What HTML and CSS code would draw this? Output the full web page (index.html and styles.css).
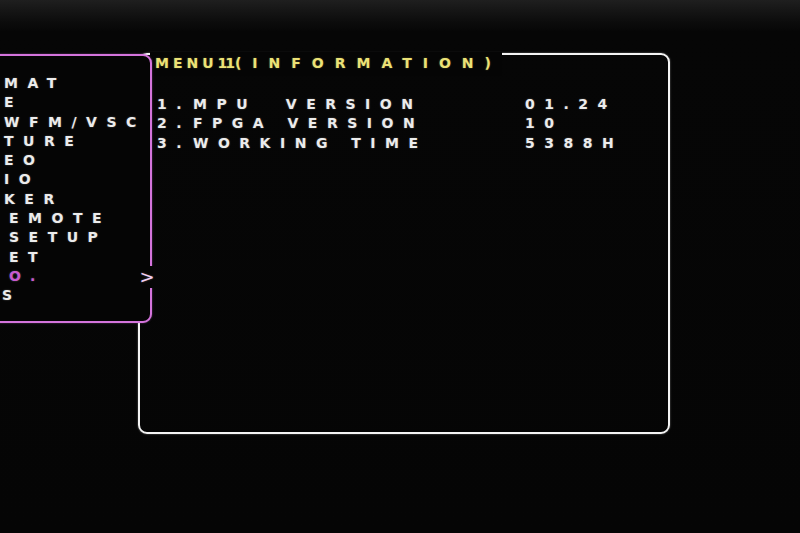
FILE: index.html
```html
<!DOCTYPE html>
<html lang="en">
<head>
<meta charset="utf-8">
<title>MENU11 (INFORMATION)</title>
<link rel="stylesheet" href="styles.css">
</head>
<body>
<div class="screen">
  <section class="info">
    <h1 class="title"><span class="t-menu">MENU</span><span class="t-num">11 </span><span class="t-info">(INFORMATION)</span></h1>
    <div class="rows">
      <div class="row"><span class="num">1.</span><span class="label">MPU  VERSION</span><span class="val">01.24</span></div>
      <div class="row"><span class="num">2.</span><span class="label">FPGA VERSION</span><span class="val">10</span></div>
      <div class="row"><span class="num">3.</span><span class="label">WORKING TIME</span><span class="val">5388H</span></div>
    </div>
  </section>
  <nav class="menu">
    <ul>
      <li>MAT</li>
      <li>E</li>
      <li>WFM/VSC</li>
      <li>TURE</li>
      <li>EO</li>
      <li>IO</li>
      <li>KER</li>
      <li class="in">EMOTE</li>
      <li class="in">SETUP</li>
      <li class="in">ET</li>
      <li class="in sel"><span>O.</span><span class="arrow">&gt;</span></li>
      <li class="cut">S</li>
    </ul>
  </nav>
</div>
</body>
</html>
```
FILE: styles.css
```css
html, body {
  margin: 0;
  height: 100%;
}
body {
  overflow: hidden;
  background: linear-gradient(#1f1f1f 0, #161616 10px, #0c0c0c 22px, #060606 32px, #050505 100%);
  font-family: "DejaVu Sans", sans-serif;
  font-size: 14px;
  font-weight: bold;
  color: #ececec;
}
.screen {
  position: relative;
  width: 800px;
  height: 533px;
  box-sizing: border-box;
  padding: 53px 0 0 138px;
}
.info {
  position: relative;
  box-sizing: border-box;
  width: 532px;
  height: 381px;
  border: 2px solid #f4f4f4;
  border-radius: 9px;
  box-shadow: 0 0 2px rgba(255, 255, 255, 0.45);
}
.title {
  position: absolute;
  top: -3px;
  left: 10px;
  margin: 0;
  padding: 2px 0 2px 5px;
  background: #050505;
  font-size: 14px;
  font-weight: bold;
  line-height: 19.5px;
  color: #ece276;
  white-space: pre;
  text-shadow: 0 0 2px rgba(236, 226, 118, 0.35);
}
.t-menu { letter-spacing: 4px; }
.t-num { letter-spacing: -2px; word-spacing: -1px; }
.t-info { letter-spacing: 11px; }
.rows {
  padding: 40px 0 0 17px;
}
.row {
  display: grid;
  grid-template-columns: 36px 332px auto;
  line-height: 19.3px;
  letter-spacing: 9.5px;
  white-space: pre;
  text-shadow: 0 0 2px rgba(255, 255, 255, 0.3);
}
.menu {
  position: absolute;
  left: -30px;
  top: 54px;
  width: 182px;
  height: 269px;
  box-sizing: border-box;
  border: 2px solid #d474dc;
  border-radius: 9px;
  background: #050505;
  box-shadow: 0 0 2px rgba(212, 116, 220, 0.5);
  padding: 18px 0 0 32px;
}
.menu ul {
  list-style: none;
  margin: 0;
  padding: 0;
  letter-spacing: 9.5px;
  line-height: 19.3px;
  text-shadow: 0 0 2px rgba(255, 255, 255, 0.3);
}
.menu li {
  display: flex;
  justify-content: space-between;
  align-items: center;
  height: 19.3px;
  white-space: pre;
}
.menu li.in { padding-left: 5px; }
.menu li.cut { margin-left: -2px; }
.menu li.sel { color: #c85ad0; }
.arrow {
  position: relative;
  left: 4px;
  width: 14px;
  height: 22px;
  display: flex;
  align-items: center;
  justify-content: center;
  background: #050505;
  color: #f3d0f3;
  font-size: 18px;
  font-weight: normal;
  letter-spacing: 0;
}
```
